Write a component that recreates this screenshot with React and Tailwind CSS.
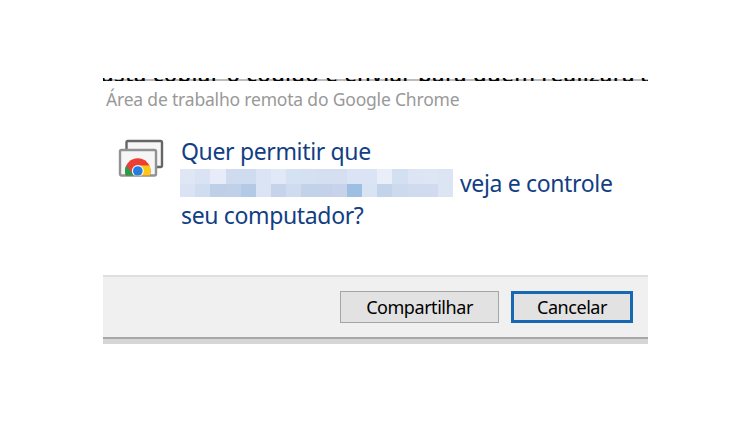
import React from "react";

const MOSAIC = [
  "#dfe6f4", "#dae3f4", "#e7ecf8", "#cfdcef", "#cfdcef", "#dae4f4", "#e1e8f6", "#d5e2f3", "#d5e1f2",
  "#d4e0f2", "#d5dff1", "#dae4f4", "#dae4f5", "#e9eef8", "#d3e0f1", "#dde5f5", "#dee6f5", "#dbe5f3",
  "#dae3f3", "#d0dcef", "#bfcfe8", "#c0d0e9", "#b3cae7", "#dae4f4", "#c5d4ea", "#cfdbee", "#c2d2e9",
  "#c3d2e9", "#c6d3ea", "#9dbfe2", "#d8e3f4", "#c3d3e9", "#cddaee", "#d0dbef", "#d0dbef", "#dbe5f4",
];

function RemoteDesktopIcon() {
  return (
    <svg viewBox="0 0 46 40" className="h-10 w-[46px] shrink-0" aria-hidden="true">
      <defs>
        <clipPath id="screen">
          <rect x="3" y="12" width="34" height="25.5" />
        </clipPath>
      </defs>
      <rect x="8.5" y="3" width="35.5" height="26" rx="1.5" fill="#f6f6f6" stroke="#666" strokeWidth="2.4" />
      <rect x="2" y="12" width="36" height="25.5" rx="1.5" fill="#f6f6f6" stroke="#929292" strokeWidth="2.4" />
      <g clipPath="url(#screen)">
        <circle cx="19.8" cy="33" r="12.8" fill="#ea3f35" />
        <path d="M8.2 27.6 A12.8 12.8 0 0 0 13 43.8 L19.8 38 L14.6 35.5 Z" fill="#269d4c" />
        <path d="M19.8 27.5 H31.4 A12.8 12.8 0 0 1 24 45 L19.8 38 L25 33 Z" fill="#fbc915" />
        <circle cx="19.8" cy="33" r="6" fill="#f6f8fc" />
        <circle cx="19.8" cy="33" r="4.8" fill="#247de0" />
      </g>
    </svg>
  );
}

function RedactedEmail() {
  return (
    <div className="grid h-7 w-[273px] shrink-0 grid-cols-[repeat(18,minmax(0,1fr))] grid-rows-[15px_13px]">
      {MOSAIC.map((color, idx) => (
        <span key={idx} style={{ backgroundColor: color }} />
      ))}
    </div>
  );
}

export default function App() {
  return (
    <main className="flex h-[421px] w-[750px] flex-col bg-white pl-[103px] pt-[78px] font-['Noto_Sans','Open_Sans',sans-serif]">
      <div className="flex w-[545px] flex-col overflow-hidden">
        {/* sliver of the page behind the dialog */}
        <div className="flex h-[3px] flex-col justify-end overflow-hidden bg-linear-to-b from-white from-34% to-[#bdbdbd] to-34%">
          <p className="-mb-1 -ml-0.5 h-6 shrink-0 whitespace-nowrap text-[22px] font-medium leading-6 tracking-[0.33px] text-black">
            asta copiar o código e enviar para quem realizará a
          </p>
        </div>

        <header className="h-[43px] whitespace-nowrap pl-[3px] pt-[5px] text-[17.5px] leading-[26px] tracking-[-0.19px] text-[#999]">
          Área de trabalho remota do Google Chrome
        </header>

        <section className="flex h-[151px] gap-[17px] pl-[15px] pt-[14px]">
          <RemoteDesktopIcon />
          <div className="-mt-[3px] whitespace-nowrap text-[23px] leading-8 tracking-[-0.35px] text-[#123e84]">
            <p>Quer permitir que</p>
            <div className="-ml-px flex items-center gap-[7px]">
              <RedactedEmail />
              <span>veja e controle</span>
            </div>
            <p>seu computador?</p>
          </div>
        </section>

        <footer className="flex h-16 justify-end gap-3 border-b-2 border-t-2 border-b-[#a7a7a7] border-t-[#dfdfdf] bg-[#f0f0f0] pr-[15px] pt-[14px] text-lg tracking-[-0.45px] text-black">
          <button type="button" className="flex h-8 w-[159px] items-center justify-center border border-[#a5a5a5] bg-[#e2e2e2]">
            Compartilhar
          </button>
          <button type="button" className="flex h-8 w-[122px] items-center justify-center border-[3px] border-[#1668b3] bg-[#e2e2e2]">
            Cancelar
          </button>
        </footer>
        <div className="h-[5px] bg-[#d6d6d6]" />
      </div>
    </main>
  );
}
